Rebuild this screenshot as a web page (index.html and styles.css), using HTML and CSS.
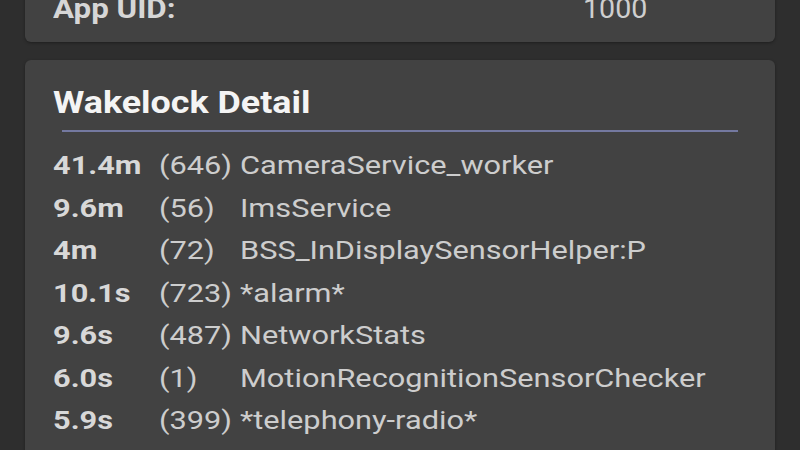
FILE: index.html
```html
<!DOCTYPE html>
<html lang="en">
<head>
  <meta charset="UTF-8" />
  <meta name="viewport" content="width=device-width, initial-scale=1" />
  <title>App Detail - Wakelocks</title>
  <link rel="stylesheet" href="styles.css">
</head>
<body>
  <main class="page">
    <!-- App info card (scrolled partly off screen) -->
    <section class="card info-card">
      <div class="info-row">
        <span class="info-label wide">App UID:</span>
        <span class="info-value wide">1000</span>
      </div>
    </section>

    <!-- Wakelock list -->
    <section class="card wakelock-card">
      <h2 class="card-title"><span class="wide">Wakelock Detail</span></h2>
      <hr class="divider" />
      <ul class="wakelock-list">
        <li><span class="wl-time wide">41.4m</span><span class="wl-count wide">(646)</span><span class="wl-name wide">CameraService_worker</span></li>
        <li><span class="wl-time wide">9.6m</span><span class="wl-count wide">(56)</span><span class="wl-name wide">ImsService</span></li>
        <li><span class="wl-time wide">4m</span><span class="wl-count wide">(72)</span><span class="wl-name wide">BSS_InDisplaySensorHelper:P</span></li>
        <li><span class="wl-time wide">10.1s</span><span class="wl-count wide">(723)</span><span class="wl-name wide">*alarm*</span></li>
        <li><span class="wl-time wide">9.6s</span><span class="wl-count wide">(487)</span><span class="wl-name wide">NetworkStats</span></li>
        <li><span class="wl-time wide">6.0s</span><span class="wl-count wide">(1)</span><span class="wl-name wide">MotionRecognitionSensorChecker</span></li>
        <li><span class="wl-time wide">5.9s</span><span class="wl-count wide">(399)</span><span class="wl-name wide">*telephony-radio*</span></li>
        <li><span class="wl-time wide">3.0s</span><span class="wl-count wide">(114)</span><span class="wl-name wide">screen</span></li>
      </ul>
    </section>
  </main>
</body>
</html>
```

FILE: styles.css
```css
body {
  margin: 0;
  background-color: #2e2e2e;
  font-family: Roboto, "Noto Sans", sans-serif;
  color: #cfcfcf;
  height: 450px;
  overflow: hidden;
}

/* the screen text is drawn a bit wider than plain Roboto */
.wide {
  display: inline-block;
  transform: scaleX(1.16);
  transform-origin: left center;
}

.page {
  display: flex;
  flex-direction: column;
  gap: 18px;
  padding: 0 25px;
  margin-top: -20px;
}

.card {
  background-color: #424242;
  border-radius: 6px;
  box-shadow: 0 1px 3px rgba(0,0,0,0.35);
}

.info-card {
  padding: 8px 28px 12px;
}

.info-row {
  display: flex;
  font-size: 27px;
  line-height: 42px;
}

.info-label {
  width: 530px;
  font-weight: 700;
  color: #d6d6d6;
}

.info-value {
  color: #cfcfcf;
  transform: scaleX(1.06);
}

.wakelock-card {
  padding: 20px 28px 0;
}

.card-title {
  margin: 0;
  font-size: 32px;
  line-height: 44px;
  font-weight: 700;
  color: #f4f4f4;
}

.card-title .wide {
  transform: scaleX(1.12);
}

.divider {
  margin: 6px 9px 12px;
  border: none;
  height: 2px;
  background-color: #7479a0;
}

.wakelock-list {
  list-style: none;
  margin: 0;
  padding: 0;
}

.wakelock-list li {
  display: grid;
  grid-template-columns: 106px 81px 1fr;
  font-size: 26.5px;
  line-height: 42.5px;
  white-space: nowrap;
}

.wl-time {
  font-weight: 700;
  color: #d8d8d8;
}

.wl-count,
.wl-name {
  color: #cdcdcd;
}
```
